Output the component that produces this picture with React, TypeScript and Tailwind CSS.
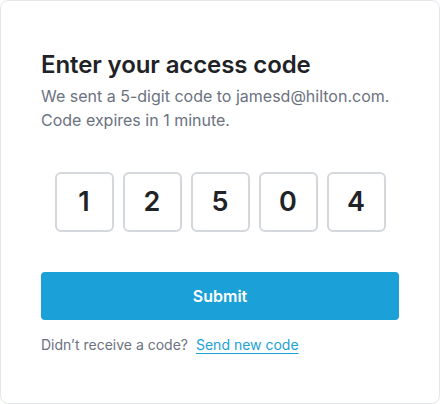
import React from "react";

const digits = ["1", "2", "5", "0", "4"];

export default function App() {
  return (
    <div
      className="w-[440px] h-[404px] bg-white"
      style={{ fontFamily: "Inter, 'Noto Sans', sans-serif" }}
    >
      <div className="h-full border border-gray-200 rounded-lg px-10 pt-[48px]">
        <h1 className="text-[24px] leading-[32px] font-semibold text-[#1f2226] tracking-[-0.1px]">
          Enter your access code
        </h1>
        <p className="mt-[3px] text-[16px] leading-[24px] text-[#6b7280]">
          We sent a 5-digit code to jamesd@hilton.com.
          <br />
          Code expires in 1 minute.
        </p>

        <div className="mt-[40px] flex justify-center gap-[9px]">
          {digits.map((d, i) => (
            <div
              key={i}
              className="w-[59px] h-[60px] border-2 border-[#d4d7dc] rounded-md flex items-center justify-center text-[27px] font-semibold text-[#1f2226]"
            >
              {d}
            </div>
          ))}
        </div>

        <button className="mt-[40px] w-full h-[48px] rounded bg-[#1ba1d8] text-white text-[16px] font-semibold">
          Submit
        </button>

        <div className="mt-[15px] flex items-center text-[14px] leading-[20px] text-[#6b7280]">
          <span>Didn’t receive a code?</span>
          <a className="ml-[8px] text-[#1ba1d8] underline underline-offset-[3px] decoration-[#1ba1d8]">
            Send new code
          </a>
        </div>
      </div>
    </div>
  );
}
